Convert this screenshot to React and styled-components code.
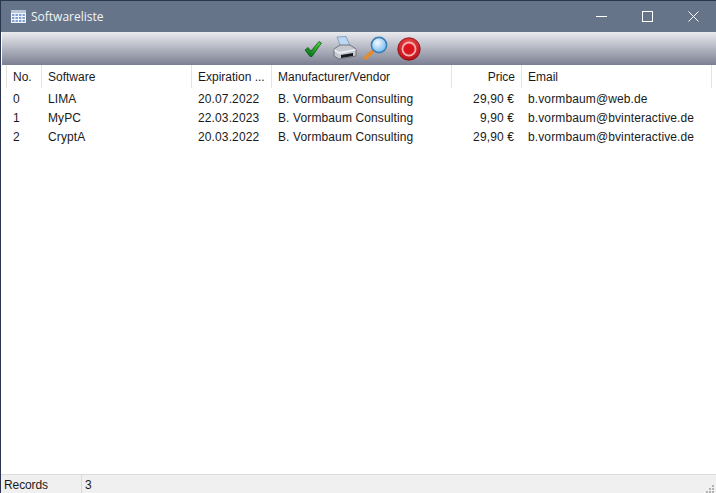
import styled, { createGlobalStyle } from 'styled-components';

const GlobalStyle = createGlobalStyle`
    html, body {
        margin: 0;
        padding: 0;
        height: 100%;
        overflow: hidden;
    }
    #root {
        height: 100%;
    }
`;

const columns = [
    { title: 'No.', width: 35, key: 'no' },
    { title: 'Software', width: 150, key: 'software' },
    { title: 'Expiration ...', width: 80, key: 'expires' },
    { title: 'Manufacturer/Vendor', width: 180, key: 'vendor' },
    { title: 'Price', width: 70, key: 'price', right: true },
    { title: 'Email', width: 190, key: 'email' },
];

const rows = [
    { no: '0', software: 'LIMA', expires: '20.07.2022', vendor: 'B. Vormbaum Consulting', price: '29,90 €', email: 'b.vormbaum@web.de' },
    { no: '1', software: 'MyPC', expires: '22.03.2023', vendor: 'B. Vormbaum Consulting', price: '9,90 €', email: 'b.vormbaum@bvinteractive.de' },
    { no: '2', software: 'CryptA', expires: '20.03.2022', vendor: 'B. Vormbaum Consulting', price: '29,90 €', email: 'b.vormbaum@bvinteractive.de' },
];

const CheckIcon = () => (
    <svg width="18" height="18" viewBox="0 0 18 18">
        <defs>
            <linearGradient id="chk" x1="0.8" y1="0" x2="0.3" y2="1">
                <stop offset="0" stopColor="#4fd23a" />
                <stop offset="1" stopColor="#05701a" />
            </linearGradient>
        </defs>
        <path d="M1 10 L4 7.5 L7 11 L15 1.5 L17.5 3 L8 16.5 L6 16.5 Z" fill="url(#chk)" stroke="#064f16" strokeWidth="0.7" />
    </svg>
);

const PrinterIcon = () => (
    <svg width="26" height="25" viewBox="0 0 26 25">
        <path d="M5 1 L14 0.5 L18 10 L9 11 Z" fill="#bcd8f3" stroke="#7a96b6" strokeWidth="0.8" />
        <path d="M2 13 L8 9 L18 9 L24 13 L24 20 L7 23 L2 20 Z" fill="#c6c9cf" stroke="#5d6169" strokeWidth="0.8" />
        <path d="M2.5 13 L7 16 L23.5 13 L23.5 14.5 L7 18 L2.5 15 Z" fill="#eceef1" />
        <path d="M9 19 L21 17 L21 20 L9 22 Z" fill="#17191e" />
    </svg>
);

const SearchIcon = () => (
    <svg width="25" height="25" viewBox="0 0 25 25">
        <defs>
            <radialGradient id="lens" cx="0.4" cy="0.35" r="0.7">
                <stop offset="0" stopColor="#f4fbff" />
                <stop offset="1" stopColor="#6fb6ee" />
            </radialGradient>
        </defs>
        <path d="M9 15 L1.5 22" stroke="#e88a25" strokeWidth="3.4" strokeLinecap="round" />
        <circle cx="15" cy="9" r="7.6" fill="url(#lens)" stroke="#3f7fb5" strokeWidth="1.6" />
    </svg>
);

const StopIcon = () => (
    <svg width="24" height="24" viewBox="0 0 24 24">
        <defs>
            <radialGradient id="stopRed" cx="0.5" cy="0.3" r="0.75">
                <stop offset="0" stopColor="#f05050" />
                <stop offset="1" stopColor="#b50b14" />
            </radialGradient>
        </defs>
        <circle cx="12" cy="12" r="11.2" fill="url(#stopRed)" stroke="#8e0a11" strokeWidth="0.8" />
        <circle cx="12" cy="12" r="6.6" fill="none" stroke="#f7b4b4" strokeWidth="1.6" />
        <circle cx="12" cy="12" r="5" fill="#dc1420" />
    </svg>
);

const GridIcon = () => (
    <svg width="15" height="13" viewBox="0 0 15 13">
        <rect x="0" y="0" width="15" height="13" fill="#f2f5fa" />
        <rect x="0" y="0" width="15" height="3" fill="#b9c6da" />
        {[0, 1, 2, 3].map((c) =>
            [0, 1, 2].map((r) => (
                <rect key={`${c}-${r}`} x={1 + c * 3.5} y={4 + r * 3} width="2.4" height="2" fill="#7d9fd6" />
            ))
        )}
    </svg>
);

const App = () => {
    return (
        <Window>
            <GlobalStyle />
            <TitleBar>
                <TitleLeft>
                    <GridIcon />
                    <TitleText>Softwareliste</TitleText>
                </TitleLeft>
                <WindowControls>
                    <ControlButton>
                        <svg width="11" height="11" viewBox="0 0 11 11"><path d="M0 5.5 H11" stroke="#fff" /></svg>
                    </ControlButton>
                    <ControlButton>
                        <svg width="11" height="11" viewBox="0 0 11 11"><rect x="0.5" y="0.5" width="10" height="10" fill="none" stroke="#fff" /></svg>
                    </ControlButton>
                    <ControlButton>
                        <svg width="11" height="11" viewBox="0 0 11 11"><path d="M0.5 0.5 L10.5 10.5 M10.5 0.5 L0.5 10.5" stroke="#fff" /></svg>
                    </ControlButton>
                </WindowControls>
            </TitleBar>
            <Toolbar>
                <ToolIcon><CheckIcon /></ToolIcon>
                <ToolIcon><PrinterIcon /></ToolIcon>
                <ToolIcon><SearchIcon /></ToolIcon>
                <ToolIcon><StopIcon /></ToolIcon>
            </Toolbar>
            <Content>
                <HeaderRow>
                    {columns.map((col) => (
                        <HeaderCell key={col.key} $width={col.width} $right={col.right}>{col.title}</HeaderCell>
                    ))}
                </HeaderRow>
                {rows.map((row) => (
                    <Row key={row.no}>
                        {columns.map((col) => (
                            <Cell key={col.key} $width={col.width} $right={col.right}>{row[col.key]}</Cell>
                        ))}
                    </Row>
                ))}
            </Content>
            <StatusBar>
                <StatusLabel>Records</StatusLabel>
                <StatusValue>3</StatusValue>
                <Grip>
                    <svg width="10" height="10" viewBox="0 0 10 10">
                        {[[7, 1], [4, 4], [7, 4], [1, 7], [4, 7], [7, 7]].map(([x, y]) => (
                            <rect key={`${x}-${y}`} x={x} y={y} width="2" height="2" fill="#b4b4b4" />
                        ))}
                    </svg>
                </Grip>
            </StatusBar>
        </Window>
    )
}

const Window = styled.div`
    height: 493px;
    width: 716px;
    display: flex;
    flex-direction: column;
    box-sizing: border-box;
    border-top: 1px solid #2c3651;
    border-left: 1px solid #2c3651;
    background: #fff;
    font-family: "Liberation Sans", Arial, sans-serif;
    font-size: 12px;
    color: #1a1a1a;
`;

const TitleBar = styled.div`
    height: 31px;
    flex: none;
    display: flex;
    align-items: center;
    justify-content: space-between;
    background: #66748a;
`;

const TitleLeft = styled.div`
    display: flex;
    align-items: center;
    gap: 5px;
    padding-left: 10px;
`;

const TitleText = styled.span`
    font-family: "Open Sans", sans-serif;
    font-size: 12px;
    color: #f2f4f7;
`;

const WindowControls = styled.div`
    display: flex;
`;

const ControlButton = styled.div`
    width: 46px;
    height: 31px;
    display: flex;
    align-items: center;
    justify-content: center;
`;

const Toolbar = styled.div`
    height: 33px;
    flex: none;
    display: flex;
    align-items: center;
    justify-content: center;
    gap: 1px;
    margin-left: 1px;
    padding-left: 3px;
    background: linear-gradient(#eaebef, #7b7f92);
`;

const ToolIcon = styled.div`
    width: 31px;
    display: flex;
    align-items: center;
    justify-content: center;
`;

const Content = styled.div`
    flex: 1;
    padding-left: 5px;
    background: #fff;
`;

const HeaderRow = styled.div`
    display: flex;
    height: 23px;
    margin-bottom: 1px;
    border-left: 1px solid #e4e4e4;
`;

const HeaderCell = styled.div`
    width: ${(p) => p.$width}px;
    box-sizing: border-box;
    flex: none;
    padding: 1px 6px 0 6px;
    line-height: 22px;
    text-align: ${(p) => (p.$right ? 'right' : 'left')};
    border-right: 1px solid #e4e4e4;
    white-space: nowrap;
    overflow: hidden;
`;

const Row = styled.div`
    display: flex;
    height: 19px;
`;

const Cell = styled.div`
    width: ${(p) => p.$width}px;
    box-sizing: border-box;
    flex: none;
    padding: 1px 7px 0 7px;
    line-height: 18px;
    letter-spacing: 0.12px;
    text-align: ${(p) => (p.$right ? 'right' : 'left')};
    white-space: nowrap;
`;

const StatusBar = styled.div`
    height: 19px;
    flex: none;
    display: flex;
    align-items: center;
    position: relative;
    box-sizing: border-box;
    border-top: 1px solid #dcdcdc;
    background: #f0f0f0;
`;

const StatusLabel = styled.div`
    width: 81px;
    box-sizing: border-box;
    padding: 2px 0 0 3px;
    line-height: 16px;
    letter-spacing: -0.1px;
    border-right: 1px solid #d9d9d9;
`;

const StatusValue = styled.div`
    padding: 2px 0 0 3px;
    line-height: 16px;
`;

const Grip = styled.div`
    position: absolute;
    right: 1px;
    bottom: 0;
    height: 10px;
`;

export default App
